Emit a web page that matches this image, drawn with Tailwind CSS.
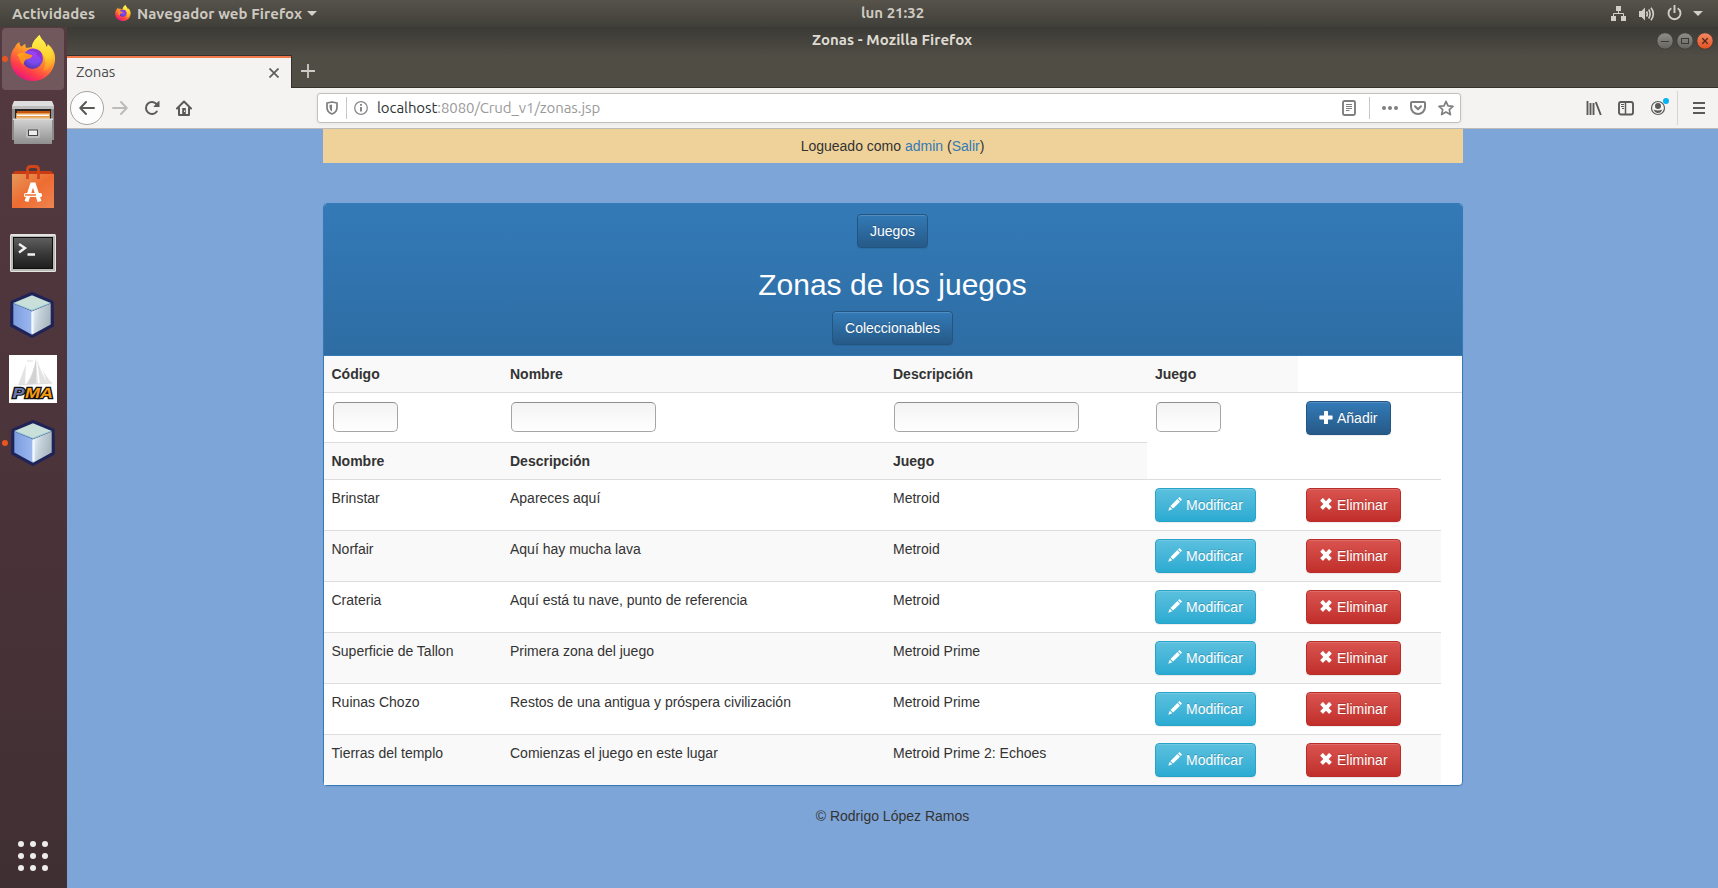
<!DOCTYPE html>
<html lang="es">
<head>
<meta charset="utf-8">
<title>Zonas</title>
<script src="https://cdn.jsdelivr.net/npm/@tailwindcss/browser@4"></script>
</head>
<body class="w-[1718px] h-[888px] overflow-hidden flex flex-col bg-[#7ea5d8] font-['Ubuntu','Noto_Sans',sans-serif]">

<svg class="absolute w-0 h-0">
  <defs>
    <linearGradient id="fxBody" x1="0.8" y1="0" x2="0.25" y2="1"><stop offset="0" stop-color="#fff04a"/><stop offset=".3" stop-color="#ffc22e"/><stop offset=".5" stop-color="#ff8a2c"/><stop offset=".78" stop-color="#ff3b4c"/><stop offset="1" stop-color="#e2108a"/></linearGradient>
    <radialGradient id="fxGlobe" cx=".6" cy=".3" r=".8"><stop offset="0" stop-color="#a63cf0"/><stop offset=".5" stop-color="#7a4bf0"/><stop offset="1" stop-color="#4a2f9c"/></radialGradient>
    <linearGradient id="fxFace" x1="0" y1="0" x2="1" y2="1"><stop offset="0" stop-color="#ffa820"/><stop offset="1" stop-color="#ff7a1c"/></linearGradient>
    <linearGradient id="fxTail" x1=".5" y1="0" x2=".5" y2="1"><stop offset="0" stop-color="#fff44f"/><stop offset=".6" stop-color="#ffd12f"/><stop offset="1" stop-color="#ff8a2a"/></linearGradient>
    <linearGradient id="metal" x1="0" y1="0" x2="0" y2="1"><stop offset="0" stop-color="#d2d2d2"/><stop offset="1" stop-color="#8f8f8f"/></linearGradient>
    <linearGradient id="bag" x1="0" y1="0" x2="1" y2="1"><stop offset="0" stop-color="#e5985a"/><stop offset=".5" stop-color="#ee6c31"/><stop offset="1" stop-color="#f08450"/></linearGradient>
    <linearGradient id="term" x1="0" y1="0" x2="0" y2="1"><stop offset="0" stop-color="#606060"/><stop offset=".5" stop-color="#3a3a3a"/><stop offset="1" stop-color="#1d1d1d"/></linearGradient>
    <linearGradient id="cubeL" x1="0" y1="0" x2="1" y2="0"><stop offset="0" stop-color="#7d9de0"/><stop offset="1" stop-color="#9cb8ef"/></linearGradient>
    <linearGradient id="cubeR" x1="0" y1="0" x2="1" y2=".3"><stop offset="0" stop-color="#eef6fb"/><stop offset=".5" stop-color="#c3d0da"/><stop offset="1" stop-color="#a9b7bf"/></linearGradient>
    <linearGradient id="wbGray" x1="0" y1="0" x2="0" y2="1"><stop offset="0" stop-color="#908e88"/><stop offset="1" stop-color="#65635d"/></linearGradient>
    <linearGradient id="wbRed" x1="0" y1="0" x2="0" y2="1"><stop offset="0" stop-color="#f58a66"/><stop offset="1" stop-color="#e2501f"/></linearGradient>
    <symbol id="firefox" viewBox="0 0 46 46">
      <path fill="url(#fxBody)" d="M5 12 C5.500 10 8 7.500 9.500 7 C9.500 10 10 11 12 11.500 C13 10 14.500 9 15.500 9 C15.300 11 15.500 12 16.500 13 L22 12 C22 7 26 3.500 29.500 0 C31 4 33 5 35 8 L36.500 12 C38 10.500 38 10 37.500 9 C43 13 45.500 19 45 25 C44 37 35 46 23 46 C10.500 46 1 37 .5 25 C.4 20 2 15 5 12Z"/>
      <path fill="url(#fxTail)" d="M22 13 C22 7 26 3.500 29.500 0 C31 4 33 5 35 8 L36.500 12 C38 10.500 38 10 37.500 9 C42 14 44 20 42 27 C41 32 37 36 33 36 C37 29 36 20 29 16 C27 14.500 24 14 22 13Z"/>
      <circle cx="22.500" cy="24" r="10" fill="url(#fxGlobe)"/>
      <path fill="url(#fxFace)" d="M7 20 C9 17.500 13 17 17 18.500 C19 20 21.500 19.500 22.500 20.500 C22 23 18 24 16 24.500 C14 26 14 28 13 30 C11 27 9 25 9 22Z"/>
      <path fill="#8b35d6" d="M17 16 C20 12.500 26 12.500 30 16 C33 19 33.500 24 32 28 C31 24 29.500 21 26 19 C28 18 26 15.500 17 16Z"/>
    </symbol>
    <symbol id="cube" viewBox="0 0 48 50">
      <path fill="#1f2358" stroke="#1f2358" stroke-width="3" stroke-linejoin="round" d="M24 2.500 L45 11.500 L45.500 36 L24 47.500 L2.500 36 L3 11.500Z"/>
      <path fill="#c8dfda" d="M24 4.500 L43.500 12.500 L24 20.500 L4.500 12.500Z"/>
      <path fill="url(#cubeL)" d="M4.500 13 L24 21 V45.500 L4.500 35Z"/>
      <path fill="url(#cubeR)" d="M43.500 13 L24 21 V45.500 L43.500 35Z"/>
      <path fill="none" stroke="#8fc8d8" stroke-width="1" d="M5 12.500 L24 20 L43 12.500"/>
      <path stroke="#eff7ff" stroke-width="2.500" d="M24.500 22 V44"/>
    </symbol>
    <symbol id="g-plus" viewBox="0 0 14 14"><path fill="#fff" d="M5 1.600 Q5 1 5.600 1 H8.400 Q9 1 9 1.600 V5.500 H13 Q13.600 5.500 13.600 6.100 V8.800 Q13.600 9.400 13 9.400 H9 V13.400 Q9 14 8.400 14 H5.600 Q5 14 5 13.400 V9.400 H1 Q.4 9.400 .4 8.800 V6.100 Q.4 5.500 1 5.500 H5Z"/></symbol>
    <symbol id="g-pencil" viewBox="0 0 14 14"><path fill="#fff" d="M11.100.3 Q11.500 0 11.900.4 L13.700 2.200 Q14 2.600 13.700 3 L12.700 4 L10.100 1.400Z M9.400 2.100 L12 4.700 L5.100 11.500 L2.500 8.900Z M1.800 9.700 L4.300 12.200 L.2 13.800Z"/></symbol>
    <symbol id="g-remove" viewBox="0 0 14 14"><path fill="#fff" d="M3.500 1.300 Q3.900.9 4.300 1.300 L7 4.200 L9.700 1.300 Q10.100.9 10.500 1.300 L12.500 3.300 Q12.900 3.700 12.500 4.100 L9.700 7 L12.500 9.800 Q12.900 10.200 12.500 10.600 L10.500 12.600 Q10.100 13 9.700 12.600 L7 9.800 L4.300 12.600 Q3.900 13 3.500 12.600 L1.500 10.600 Q1.100 10.200 1.500 9.800 L4.300 7 L1.500 4.100 Q1.100 3.700 1.500 3.300Z"/></symbol>
  </defs>
</svg>

<!-- System bar -->
<header class="relative h-[27px] shrink-0 flex items-center bg-linear-to-b from-[#57534b] to-[#403f39] text-[#dfdbd2]/90 text-[15px] font-bold leading-[26px]">
  <span class="pl-3 w-[115px] tracking-[0.08px]">Actividades</span>
  <svg class="w-4 h-4 mb-px"><use href="#firefox"/></svg>
  <span class="ml-[6px] w-[170px] whitespace-nowrap tracking-[0.08px]">Navegador web Firefox</span>
  <svg class="w-[10px] h-[5px]" viewBox="0 0 10 5"><path fill="#d3d0c8" d="M0 0H10L5 5Z"/></svg>
  <span class="absolute left-[861px] top-0">lun 21:32</span>
  <div class="ml-auto flex items-center pr-[15px]">
    <svg class="w-[15px] h-[15px]" viewBox="0 0 15 15"><path fill="#d0cec8" d="M5 0h5v5H5zM0 10h5v5H0zM10 10h5v5h-5z"/><path fill="none" stroke="#d0cec8" d="M7.500 5V7.500M2.500 10V7.500H12.500V10"/></svg>
    <svg class="w-4 h-[14px] ml-[13px]" viewBox="0 0 16 14"><path fill="#d0cec8" d="M0 4H2.500L6 .5V13.500L2.500 10H0Z"/><path fill="none" stroke="#d0cec8" stroke-width="1.700" d="M7.500 4.500Q9.200 7 7.500 9.500M9.700 2.500Q12.500 7 9.700 11.500M12 .7Q16.600 7 12 13.300"/></svg>
    <svg class="w-[15px] h-4 ml-[12px] mb-px" viewBox="0 0 15 16"><path fill="none" stroke="#d0cec8" stroke-width="1.900" d="M4.300 3.200A6 6 0 1 0 10.700 3.200M7.500 0V8"/></svg>
    <svg class="w-[10px] h-[5px] ml-[11px]" viewBox="0 0 10 5"><path fill="#d0cec8" d="M0 0H10L5 5Z"/></svg>
  </div>
</header>

<div class="flex flex-1 min-h-0">
  <!-- Dock -->
  <aside class="w-[67px] shrink-0 bg-linear-to-b from-[#543a40] via-[#4b343a] to-[#402f32] flex flex-col items-center pt-px gap-[2px]">
    <div class="relative w-[62px] h-[62px] mr-px rounded-[4px] bg-[#70585d] flex items-center justify-center">
      <svg class="w-[46px] h-[46px] mt-[-2px]"><use href="#firefox"/></svg>
      <i class="absolute left-0 top-[28px] w-[6px] h-[6px] rounded-full bg-[#e95420]"></i>
    </div>
    <div class="w-[62px] h-[62px] mr-px flex items-center justify-center">
      <svg class="w-[42px] h-[44px]" viewBox="0 0 42 44">
        <path fill="#dedede" d="M2 0H40L42 5V8H0V5Z"/><path fill="#8c8c8c" d="M0 5H42V39H0Z"/><path fill="#bdbdbd" d="M0 5H42V8H0Z"/>
        <path fill="#252525" d="M3 8H39V18H3Z"/><path fill="#c4560f" d="M5 10H38V13H5Z"/><path fill="#e89a4c" d="M4 12H38V18H4Z"/><path fill="#fff" d="M5 13.500H37V15H5Z"/><path fill="#ecb36d" d="M5 16H37V18H5Z"/>
        <path fill="url(#metal)" d="M2 18H40V43H2Z"/><path fill="#dcdcdc" d="M1 17.500H41V19H1Z"/>
        <rect x="14" y="26" width="14" height="11" rx="2" fill="#bdbdbd"/><rect x="16.500" y="29" width="9" height="5.500" fill="#ededed" stroke="#444"/>
      </svg>
    </div>
    <div class="w-[62px] h-[62px] mr-px flex items-center justify-center">
      <svg class="w-[42px] h-[44px]" viewBox="0 0 42 44">
        <path fill="#c63b12" d="M0 9L3 6H39L42 9Z"/>
        <rect y="9" width="42" height="34" fill="url(#bag)"/>
        <path fill="none" stroke="#d1451a" stroke-width="2.800" d="M15.500 14V4.500Q15.500 1.500 18.500 1.500H23.500Q26.500 1.500 26.500 4.500V14"/>
        <path fill="none" stroke="#fff" stroke-width="4" d="M14.500 36.500L20 19.500H22L27.500 36.500"/>
        <rect x="12" y="28" width="18" height="4" rx="1.500" fill="#fff"/><path stroke="#ee6c31" stroke-width="1.500" d="M13 30H24"/>
      </svg>
    </div>
    <div class="w-[62px] h-[62px] mr-px flex items-center justify-center">
      <svg class="w-[46px] h-[38px] mt-[3px]" viewBox="0 0 46 38">
        <rect width="46" height="38" rx="1.500" fill="#e3e3e1"/><rect x="1" y="2" width="44" height="35" fill="#b9b9b7"/>
        <rect x="3.500" y="3.500" width="39" height="31" fill="url(#term)" stroke="#101010"/>
        <path fill="none" stroke="#f2f2f2" stroke-width="2.400" d="M9 10L15 14L9 18.500M17.500 20.500H25"/>
      </svg>
    </div>
    <div class="w-[62px] h-[62px] mr-[3px] flex items-center justify-center"><svg class="w-[46px] h-[48px]"><use href="#cube"/></svg></div>
    <div class="w-[62px] h-[62px] mr-px flex items-center justify-center">
      <svg class="w-[48px] h-[48px]" viewBox="0 0 48 48">
        <rect width="48" height="48" fill="#fff"/>
        <path fill="#e3e3e3" d="M17 9L16 30H9Q13 20 17 9ZM27 3Q25 18 17 29H29ZM28 4L31 29H39Q31 16 28 4ZM33 13Q37 22 43 28H38Z"/><path fill="#d2d2d2" d="M27 4V29H19Q24 20 27 4Z"/><path stroke="#dedede" d="M18 6H24M10 30L43 28"/>
        <g font-family="Liberation Sans" font-size="14.500" font-weight="bold" font-style="italic" stroke="#111" stroke-width="2.400" paint-order="stroke"><text x="3.500" y="42.500" fill="#6c78af" textLength="12" lengthAdjust="spacingAndGlyphs">P</text><text x="16" y="42.500" fill="#f89c0e" textLength="28" lengthAdjust="spacingAndGlyphs">MA</text></g>
      </svg>
    </div>
    <div class="relative w-[62px] h-[62px] mr-px flex items-center justify-center">
      <svg class="w-[46px] h-[48px]"><use href="#cube"/></svg>
      <i class="absolute left-0 top-[28px] w-[6px] h-[6px] rounded-full bg-[#e95420]"></i>
    </div>
    <div class="mt-auto mb-[17px] mr-px grid grid-cols-3 gap-[6px]">
      <i class="w-[6px] h-[6px] rounded-full bg-[#eeeded]"></i><i class="w-[6px] h-[6px] rounded-full bg-[#eeeded]"></i><i class="w-[6px] h-[6px] rounded-full bg-[#eeeded]"></i>
      <i class="w-[6px] h-[6px] rounded-full bg-[#eeeded]"></i><i class="w-[6px] h-[6px] rounded-full bg-[#eeeded]"></i><i class="w-[6px] h-[6px] rounded-full bg-[#eeeded]"></i>
      <i class="w-[6px] h-[6px] rounded-full bg-[#eeeded]"></i><i class="w-[6px] h-[6px] rounded-full bg-[#eeeded]"></i><i class="w-[6px] h-[6px] rounded-full bg-[#eeeded]"></i>
    </div>
  </aside>

  <div class="flex-1 min-w-0 flex flex-col">
    <!-- Window title -->
    <div class="h-[28px] shrink-0 bg-linear-to-b from-[#3b3a35] to-[#4f4c45] flex items-center text-[#dfdbd2] text-[15px] font-bold leading-[26px]">
      <span class="ml-[745px] pb-[2px] whitespace-nowrap tracking-[0.06px]">Zonas - Mozilla Firefox</span>
      <div class="ml-auto mr-1 flex gap-[2px]">
        <svg class="w-[18px] h-[18px]" viewBox="0 0 18 18"><circle cx="9" cy="9" r="8.200" fill="url(#wbGray)" stroke="#393832" stroke-width=".8"/><path stroke="#3a3934" d="M5 9.500H13"/></svg>
        <svg class="w-[18px] h-[18px]" viewBox="0 0 18 18"><circle cx="9" cy="9" r="8.200" fill="url(#wbGray)" stroke="#393832" stroke-width=".8"/><rect x="5.500" y="6.500" width="7" height="5" fill="none" stroke="#3a3934"/></svg>
        <svg class="w-[18px] h-[18px]" viewBox="0 0 18 18"><circle cx="9" cy="9" r="8.200" fill="url(#wbRed)" stroke="#393832" stroke-width=".8"/><path stroke="#4a2a1b" stroke-width="1.300" d="M6.300 6.300L11.700 11.700M11.700 6.300L6.300 11.700"/></svg>
      </div>
    </div>
    <!-- Tabs -->
    <div class="h-[33px] shrink-0 flex bg-[#504d45]">
      <div class="w-[225px] border-t border-r border-[#33322d] bg-[#f4f3f2]">
        <div class="h-[32px] border-t-2 border-[#f3794b] flex items-center justify-between pl-[9px] pr-[12px] text-[15px] text-[#4c4c4c]">
          <span class="pb-px tracking-[-0.15px]">Zonas</span>
          <svg class="w-[10px] h-[10px] mb-px" viewBox="0 0 10 10"><path stroke="#5c5c5c" stroke-width="1.700" d="M.5.5L9.500 9.500M9.500.5L.5 9.500"/></svg>
        </div>
      </div>
      <div class="flex-1 border-b border-[#33322d] pl-[9px] pt-[9px]">
        <svg class="w-[14px] h-[14px]" viewBox="0 0 14 14"><path stroke="#cecac4" stroke-width="1.800" d="M7 0V14M0 7H14"/></svg>
      </div>
    </div>
    <!-- Toolbar -->
    <nav class="h-[41px] shrink-0 bg-[#f4f3f2] border-b border-[#bdbbb9] flex items-center pl-[3px] pr-[3px]">
      <div class="w-[34px] h-[34px] rounded-full border border-[#a5a4a3] bg-[#fdfdfd] flex items-center justify-center">
        <svg class="w-4 h-4" viewBox="0 0 16 16"><path fill="none" stroke="#5a5a59" stroke-width="2" stroke-linecap="round" stroke-linejoin="round" d="M15 8H1.500M7 2L1.300 8L7 14"/></svg>
      </div>
      <div class="w-8 flex justify-center"><svg class="w-4 h-4" viewBox="0 0 16 16"><path fill="none" stroke="#bdbcbb" stroke-width="2" stroke-linecap="round" stroke-linejoin="round" d="M1 8H14.500M9 2L14.700 8L9 14"/></svg></div>
      <div class="w-8 flex justify-center"><svg class="w-4 h-4" viewBox="0 0 16 16"><path fill="none" stroke="#5a5a59" stroke-width="2" stroke-linecap="round" d="M12.800 11.500A6 6 0 1 1 12.500 4"/><path fill="#5a5a59" d="M15 1Q15.500 1 15.500 1.500V7H10Q9.200 7 9.800 6.300L14.500 1.300Z"/></svg></div>
      <div class="w-8 flex justify-center"><svg class="w-4 h-4" viewBox="0 0 16 16"><path fill="none" stroke="#5a5a59" stroke-width="2" stroke-linecap="round" stroke-linejoin="round" d="M1 8.500L8 1.500L15 8.500M3 8V15H13V8"/><path fill="#5a5a59" d="M6.200 8H9.800V15H6.200Z"/><rect x="8" y="10.500" width="1" height="1.500" fill="#f4f3f2"/></svg></div>
      <div class="ml-[117px] w-[1144px] h-[30px] rounded-[3px] border border-[#c2bfbc] bg-white flex items-center shadow-[0_1px_4px_rgba(0,0,0,0.06)]">
        <div class="w-7 flex justify-center"><svg class="w-3 h-[14px]" viewBox="0 0 12 14"><path fill="none" stroke="#7d7d7c" stroke-width="1.700" stroke-linejoin="round" d="M6 1L11 2V6.500Q11 11 6 13Q1 11 1 6.500V2Z"/><path fill="#7d7d7c" d="M6 3.500V10.500Q3.500 9 3.500 6V4Z"/></svg></div>
        <i class="w-px h-[22px] bg-[#c9c8c7]"></i>
        <div class="w-7 flex justify-center"><svg class="w-[14px] h-[14px]" viewBox="0 0 14 14"><circle cx="7" cy="7" r="6.300" fill="none" stroke="#8a8a89" stroke-width="1.300"/><path stroke="#808080" stroke-width="1.900" d="M7 6V10.500M7 3V4.800"/></svg></div>
        <span class="pl-[2px] pt-px text-[15px] tracking-[-0.08px] text-[#9a9a9a] whitespace-nowrap"><span class="text-[#2e3436]">localhost</span>:8080/Crud_v1/zonas.jsp</span>
        <div class="ml-auto w-7 flex justify-center"><svg class="w-[14px] h-4" viewBox="0 0 14 16"><rect x="1" y="1" width="12" height="14" rx="1.500" fill="none" stroke="#7f7f7e" stroke-width="1.900"/><path stroke="#7f7f7e" d="M4 4.500H10M4 6.500H10M4 8.500H10M4 10.500H7.500"/></svg></div>
        <i class="ml-[6px] w-px h-[22px] bg-[#c9c8c7]"></i>
        <div class="ml-[6px] w-7 flex justify-center"><svg class="w-4 h-4" viewBox="0 0 16 16"><g fill="#7f7f7e"><circle cx="2" cy="8" r="2"/><circle cx="8" cy="8" r="2"/><circle cx="14" cy="8" r="2"/></g></svg></div>
        <div class="w-7 flex justify-center"><svg class="w-4 h-4" viewBox="0 0 16 16"><path fill="none" stroke="#7f7f7e" stroke-width="2" stroke-linejoin="round" d="M2 2H14Q15 2 15 3V7A7 7 0 0 1 1 7V3Q1 2 2 2Z"/><path fill="none" stroke="#7f7f7e" stroke-width="2" stroke-linecap="round" stroke-linejoin="round" d="M5 6.300L8 9.200L11 6.300"/></svg></div>
        <div class="w-7 flex justify-center"><svg class="w-4 h-4" viewBox="0 0 16 16"><path fill="none" stroke="#7f7f7e" stroke-width="1.700" stroke-linejoin="round" d="M8 1.300L10 5.800L15 6.300L11.300 9.600L12.400 14.600L8 12L3.600 14.600L4.700 9.600L1 6.300L6 5.800Z"/></svg></div>
      </div>
      <div class="ml-auto w-8 flex justify-center"><svg class="w-4 h-4" viewBox="0 0 16 16"><path fill="none" stroke="#5a5a59" stroke-width="1.900" d="M1.500 1V15M4.500 3V15M7.500 3V15M9.800 2L14.800 15"/></svg></div>
      <div class="w-8 flex justify-center"><svg class="w-4 h-4" viewBox="0 0 16 16"><rect x="1" y="2" width="14" height="12.500" rx="2" fill="none" stroke="#5a5a59" stroke-width="1.900"/><path stroke="#5a5a59" stroke-width="1.500" d="M7.500 2V14"/><path stroke="#5a5a59" d="M3 4.500H6M3 6.500H6M4 8.500H6"/></svg></div>
      <div class="w-8 flex justify-center"><svg class="w-[22px] h-5 ml-[2px]" viewBox="0 0 22 20"><circle cx="10" cy="10" r="6.500" fill="none" stroke="#5a5a59" stroke-width="1.200"/><circle cx="10" cy="8" r="3" fill="#5a5a59"/><path fill="#5a5a59" d="M5.600 11.500Q10 13.500 14.400 11.500Q13 15 10 15Q7 15 5.600 11.500Z"/><circle cx="18" cy="3" r="3" fill="#00b3f4"/></svg></div>
      <i class="ml-[3px] mr-[5px] w-px h-[34px] bg-[#d6d4d2]"></i>
      <div class="w-8 flex justify-center"><svg class="w-3 h-3" viewBox="0 0 12 12"><path stroke="#5a5a59" stroke-width="2" d="M0 1H12M0 6H12M0 11H12"/></svg></div>
    </nav>

    <!-- Web page -->
    <main class="flex-1 min-h-0 bg-[#7ea5d8] font-['Liberation_Sans',Arial,sans-serif] text-[14px] leading-5 text-[#333]">
      <div class="ml-[255.5px] w-[1140px]">
        <div class="h-[34px] bg-[#efd299] text-center pt-[7px]">Logueado como <a class="text-[#337ab7]">admin</a> (<a class="text-[#337ab7]">Salir</a>)</div>

        <section class="mt-10 h-[583px] rounded-[4px] border border-[#337ab7] bg-white shadow-[0_1px_2px_rgba(0,0,0,0.05)]">
          <div class="h-[152px] pt-[10px] rounded-t-[3px] border-b border-[#337ab7] bg-linear-to-b from-[#337ab7] to-[#2e6da4] flex flex-col items-center text-white">
            <button class="h-[34px] w-[71px] rounded-[4px] border border-[#245580] bg-linear-to-b from-[#337ab7] to-[#265a88] [text-shadow:0_-1px_0_rgba(0,0,0,0.2)] shadow-[inset_0_1px_0_rgba(255,255,255,0.15),0_1px_1px_rgba(0,0,0,0.075)]">Juegos</button>
            <h2 class="mt-5 mb-[10px] text-[30px] leading-[33px]">Zonas de los juegos</h2>
            <button class="h-[34px] w-[121px] shrink-0 rounded-[4px] border border-[#245580] bg-linear-to-b from-[#337ab7] to-[#265a88] [text-shadow:0_-1px_0_rgba(0,0,0,0.2)] shadow-[inset_0_1px_0_rgba(255,255,255,0.15),0_1px_1px_rgba(0,0,0,0.075)]">Coleccionables</button>
          </div>

          <table class="w-[1138px] table-fixed border-separate border-spacing-0 text-left">
            <colgroup><col class="w-[178.5px]"><col class="w-[383px]"><col class="w-[262px]"><col class="w-[151px]"><col class="w-[143px]"><col class="w-[20.5px]"></colgroup>
            <tbody id="rows">
              <tr class="h-[36px] align-top">
                <th class="px-2 pt-2 bg-[#f9f9f9]">Código</th><th class="px-2 pt-2 bg-[#f9f9f9]">Nombre</th><th class="px-2 pt-2 bg-[#f9f9f9]">Descripción</th><th class="px-2 pt-2 bg-[#f9f9f9]">Juego</th><td colspan="2"></td>
              </tr>
              <tr class="h-[50px] align-top">
                <td class="border-t border-[#ddd] pl-[9px] pt-[9px]"><input class="block w-[65px] h-[30px] rounded-[5px] border border-[#a6a6a4] border-t-[#8e8e8c] bg-linear-to-b from-[#f3f3f3] to-white"></td>
                <td class="border-t border-[#ddd] pl-[9px] pt-[9px]"><input class="block w-[145px] h-[30px] rounded-[5px] border border-[#a6a6a4] border-t-[#8e8e8c] bg-linear-to-b from-[#f3f3f3] to-white"></td>
                <td class="border-t border-[#ddd] pl-[9px] pt-[9px]"><input class="block w-[185px] h-[30px] rounded-[5px] border border-[#a6a6a4] border-t-[#8e8e8c] bg-linear-to-b from-[#f3f3f3] to-white"></td>
                <td class="border-t border-[#ddd] pl-[9px] pt-[9px]"><input class="block w-[65px] h-[30px] rounded-[5px] border border-[#a6a6a4] border-t-[#8e8e8c] bg-linear-to-b from-[#f3f3f3] to-white"></td>
                <td colspan="2" class="border-t border-[#ddd] pl-2 pt-2"><button class="flex items-center gap-1 h-[34px] w-[85px] pl-3 rounded-[4px] border border-[#245580] bg-linear-to-b from-[#337ab7] to-[#265a88] text-white [text-shadow:0_-1px_0_rgba(0,0,0,0.2)] shadow-[inset_0_1px_0_rgba(255,255,255,0.15),0_1px_1px_rgba(0,0,0,0.075)]"><svg class="w-[14px] h-[14px] mt-[-2px]"><use href="#g-plus"/></svg>Añadir</button></td>
              </tr>
              <tr class="h-[37px] align-top">
                <th class="border-t border-[#ddd] px-2 pt-2 bg-[#f9f9f9]">Nombre</th><th class="border-t border-[#ddd] px-2 pt-2 bg-[#f9f9f9]">Descripción</th><th class="border-t border-[#ddd] px-2 pt-2 bg-[#f9f9f9]">Juego</th><td colspan="3"></td>
              </tr>
            </tbody>
          </table>
        </section>
        <footer class="mt-5 text-center">© Rodrigo López Ramos</footer>
      </div>
    </main>
  </div>
</div>

<template id="row">
  <tr class="h-[51px] align-top">
    <td class="cell border-t border-[#ddd] px-2 pt-2"></td>
    <td class="cell border-t border-[#ddd] px-2 pt-2"></td>
    <td class="cell border-t border-[#ddd] px-2 pt-2"></td>
    <td class="cell border-t border-[#ddd] pl-2 pt-2"><button class="flex items-center gap-1 h-[34px] w-[101px] pl-3 rounded-[4px] border border-[#28a4c9] bg-linear-to-b from-[#5bc0de] to-[#2aabd2] text-white [text-shadow:0_-1px_0_rgba(0,0,0,0.2)] shadow-[inset_0_1px_0_rgba(255,255,255,0.15),0_1px_1px_rgba(0,0,0,0.075)]"><svg class="w-[14px] h-[14px] mt-[-2px]"><use href="#g-pencil"/></svg>Modificar</button></td>
    <td class="cell border-t border-[#ddd] pl-2 pt-2"><button class="flex items-center gap-1 h-[34px] w-[95px] pl-3 rounded-[4px] border border-[#b92c28] bg-linear-to-b from-[#d9534f] to-[#c12e2a] text-white [text-shadow:0_-1px_0_rgba(0,0,0,0.2)] shadow-[inset_0_1px_0_rgba(255,255,255,0.15),0_1px_1px_rgba(0,0,0,0.075)]"><svg class="w-[14px] h-[14px] mt-[-2px]"><use href="#g-remove"/></svg>Eliminar</button></td>
    <td></td>
  </tr>
</template>
<script>
  const zonas = [
    ["Brinstar", "Apareces aquí", "Metroid"],
    ["Norfair", "Aquí hay mucha lava", "Metroid"],
    ["Crateria", "Aquí está tu nave, punto de referencia", "Metroid"],
    ["Superficie de Tallon", "Primera zona del juego", "Metroid Prime"],
    ["Ruinas Chozo", "Restos de una antigua y próspera civilización", "Metroid Prime"],
    ["Tierras del templo", "Comienzas el juego en este lugar", "Metroid Prime 2: Echoes"]
  ];
  const body = document.getElementById("rows");
  zonas.forEach((z, i) => {
    const tr = document.getElementById("row").content.firstElementChild.cloneNode(true);
    z.forEach((t, c) => tr.children[c].textContent = t);
    if (i % 2) tr.querySelectorAll(".cell").forEach(td => td.classList.add("bg-[#f9f9f9]"));
    body.appendChild(tr);
  });
</script>
</body>
</html>
